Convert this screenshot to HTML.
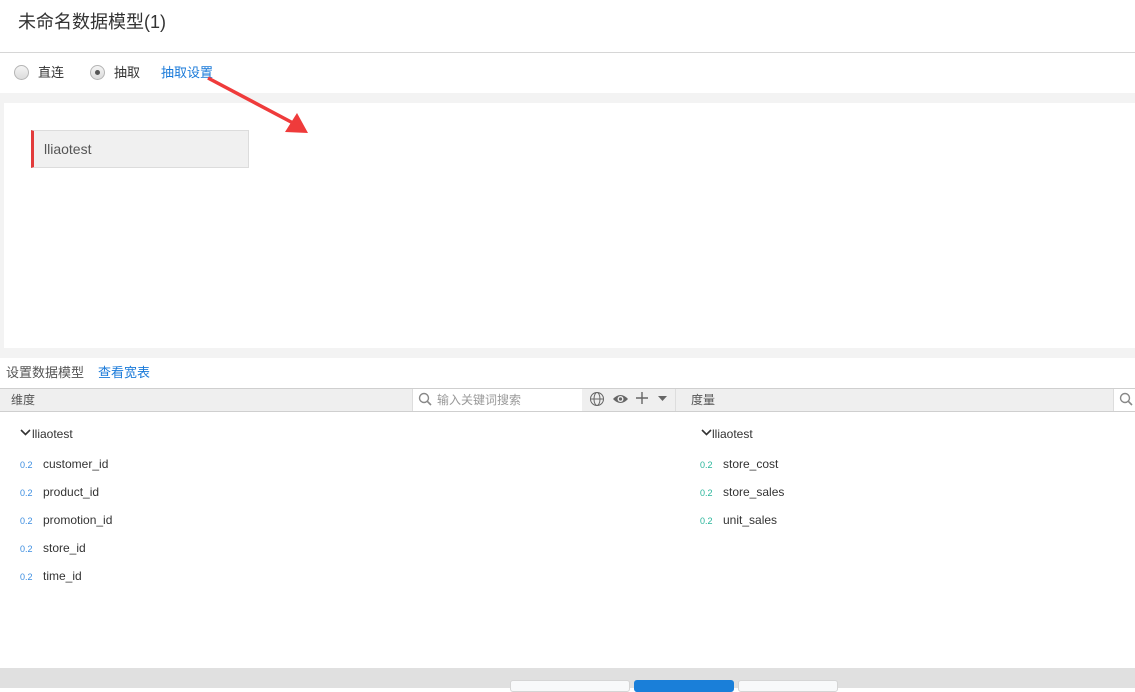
<!DOCTYPE html>
<html><head><meta charset="utf-8"><style>
*{margin:0;padding:0;box-sizing:border-box}
body{width:1135px;height:688px;overflow:hidden;background:#fff;font-family:"Liberation Sans","Noto Sans CJK SC",sans-serif;color:#333;position:relative}
.a{position:absolute}
.t{font-size:13px;white-space:nowrap;line-height:16px}
.n{font-size:9px;color:#3b8de0}
.g{font-size:9px;color:#28b59a}
</style></head><body>
<div class="a" style="left:18px;top:10px;font-size:18px;line-height:24px;color:#333">未命名数据模型(1)</div>
<div class="a" style="left:0;top:52px;width:1135px;height:1px;background:#d6d6d6"></div>
<div class="a" style="left:14px;top:65px;width:15px;height:15px;border-radius:50%;border:1px solid #b5b5b5;background:linear-gradient(#f4f4f4,#dcdcdc)"></div>
<div class="a t" style="left:38px;top:65px">直连</div>
<div class="a" style="left:90px;top:65px;width:15px;height:15px;border-radius:50%;border:1px solid #b5b5b5;background:linear-gradient(#f4f4f4,#dcdcdc)"><div style="position:absolute;left:4px;top:4px;width:5px;height:5px;border-radius:50%;background:#555"></div></div>
<div class="a t" style="left:114px;top:65px">抽取</div>
<div class="a t" style="left:161px;top:65px;color:#1a7ad9">抽取设置</div>
<div class="a" style="left:0;top:93px;width:1135px;height:10px;background:#f3f3f3"></div>
<div class="a" style="left:0;top:103px;width:4px;height:245px;background:#f3f3f3"></div>
<div class="a" style="left:0;top:348px;width:1135px;height:10px;background:#f3f3f3"></div>
<div class="a" style="left:31px;top:130px;width:218px;height:38px;background:#f0f0f0;border:1px solid #dcdcdc;border-left:3px solid #e23b3b"></div>
<div class="a" style="left:44px;top:141px;font-size:14px;color:#555">lliaotest</div>
<svg class="a" style="left:205px;top:75px" width="105" height="60"><line x1="3" y1="3" x2="88" y2="48" stroke="#ef3b3b" stroke-width="3.5"/><polygon points="103,58 80,57 92,38" fill="#ef3b3b"/></svg>
<div class="a t" style="left:6px;top:365px;color:#555">设置数据模型</div>
<div class="a t" style="left:98px;top:365px;color:#1a7ad9">查看宽表</div>
<div class="a" style="left:0;top:388px;width:1135px;height:24px;background:#efefef;border-top:1px solid #cfcfcf;border-bottom:1px solid #cfcfcf"></div>
<div class="a" style="left:11px;top:392px;font-size:12px;line-height:16px;color:#555">维度</div>
<div class="a" style="left:412px;top:389px;width:170px;height:22px;background:#fff;border-left:1px solid #ddd"></div>
<svg class="a" style="left:418px;top:392px" width="14" height="14"><circle cx="6" cy="6" r="4.5" fill="none" stroke="#888" stroke-width="1.4"/><line x1="9.3" y1="9.3" x2="13" y2="13" stroke="#888" stroke-width="1.6"/></svg>
<div class="a" style="left:437px;top:392px;font-size:12px;line-height:16px;color:#999">输入关键词搜索</div>
<svg class="a" style="left:589px;top:391px" width="16" height="16"><circle cx="8" cy="8" r="6.5" fill="none" stroke="#666"/><ellipse cx="8" cy="8" rx="3" ry="6.5" fill="none" stroke="#666"/><line x1="1.5" y1="8" x2="14.5" y2="8" stroke="#666"/></svg>
<svg class="a" style="left:612px;top:393px" width="17" height="12"><path d="M1 6Q8.5-2 16 6Q8.5 14 1 6Z" fill="#666"/><circle cx="8.5" cy="6" r="3" fill="#eee"/><circle cx="8.5" cy="6" r="1.6" fill="#666"/></svg>
<svg class="a" style="left:635px;top:391px" width="14" height="14"><path d="M7 1V13M1 7H13" stroke="#666" stroke-width="1.4"/></svg>
<svg class="a" style="left:658px;top:396px" width="9" height="6"><polygon points="0,0 9,0 4.5,5" fill="#666"/></svg>
<div class="a" style="left:675px;top:389px;width:1px;height:22px;background:#ddd"></div>
<div class="a" style="left:691px;top:392px;font-size:12px;line-height:16px;color:#555">度量</div>
<div class="a" style="left:1113px;top:389px;width:22px;height:22px;background:#fff;border-left:1px solid #ddd"></div>
<svg class="a" style="left:1119px;top:392px" width="16" height="16"><circle cx="6" cy="6" r="4.5" fill="none" stroke="#888" stroke-width="1.4"/><line x1="9.3" y1="9.3" x2="13" y2="13" stroke="#888" stroke-width="1.6"/></svg>
<svg class="a" style="left:20px;top:429px" width="11" height="7"><path d="M1 1L5.5 5.5L10 1" fill="none" stroke="#333" stroke-width="1.6"/></svg>
<div class="a" style="left:32px;top:427px;font-size:12px">lliaotest</div>
<svg class="a" style="left:701px;top:429px" width="11" height="7"><path d="M1 1L5.5 5.5L10 1" fill="none" stroke="#333" stroke-width="1.6"/></svg>
<div class="a" style="left:712px;top:427px;font-size:12px">lliaotest</div>
<div class="a n" style="left:20px;top:460px">0.2</div><div class="a" style="left:43px;top:457px;font-size:12px">customer_id</div>
<div class="a n" style="left:20px;top:488px">0.2</div><div class="a" style="left:43px;top:485px;font-size:12px">product_id</div>
<div class="a n" style="left:20px;top:516px">0.2</div><div class="a" style="left:43px;top:513px;font-size:12px">promotion_id</div>
<div class="a n" style="left:20px;top:544px">0.2</div><div class="a" style="left:43px;top:541px;font-size:12px">store_id</div>
<div class="a n" style="left:20px;top:572px">0.2</div><div class="a" style="left:43px;top:569px;font-size:12px">time_id</div>
<div class="a g" style="left:700px;top:460px">0.2</div><div class="a" style="left:723px;top:457px;font-size:12px">store_cost</div>
<div class="a g" style="left:700px;top:488px">0.2</div><div class="a" style="left:723px;top:485px;font-size:12px">store_sales</div>
<div class="a g" style="left:700px;top:516px">0.2</div><div class="a" style="left:723px;top:513px;font-size:12px">unit_sales</div>
<div class="a" style="left:0;top:668px;width:1135px;height:20px;background:#e0e0e0"></div>
<div class="a" style="left:510px;top:680px;width:120px;height:12px;background:#f8f9fa;border:1px solid #d5d5d5;border-radius:3px"></div>
<div class="a" style="left:634px;top:680px;width:100px;height:12px;background:#1a7fd9;border-radius:3px"></div>
<div class="a" style="left:738px;top:680px;width:100px;height:12px;background:#f8f9fa;border:1px solid #d5d5d5;border-radius:3px"></div>
</body></html>
